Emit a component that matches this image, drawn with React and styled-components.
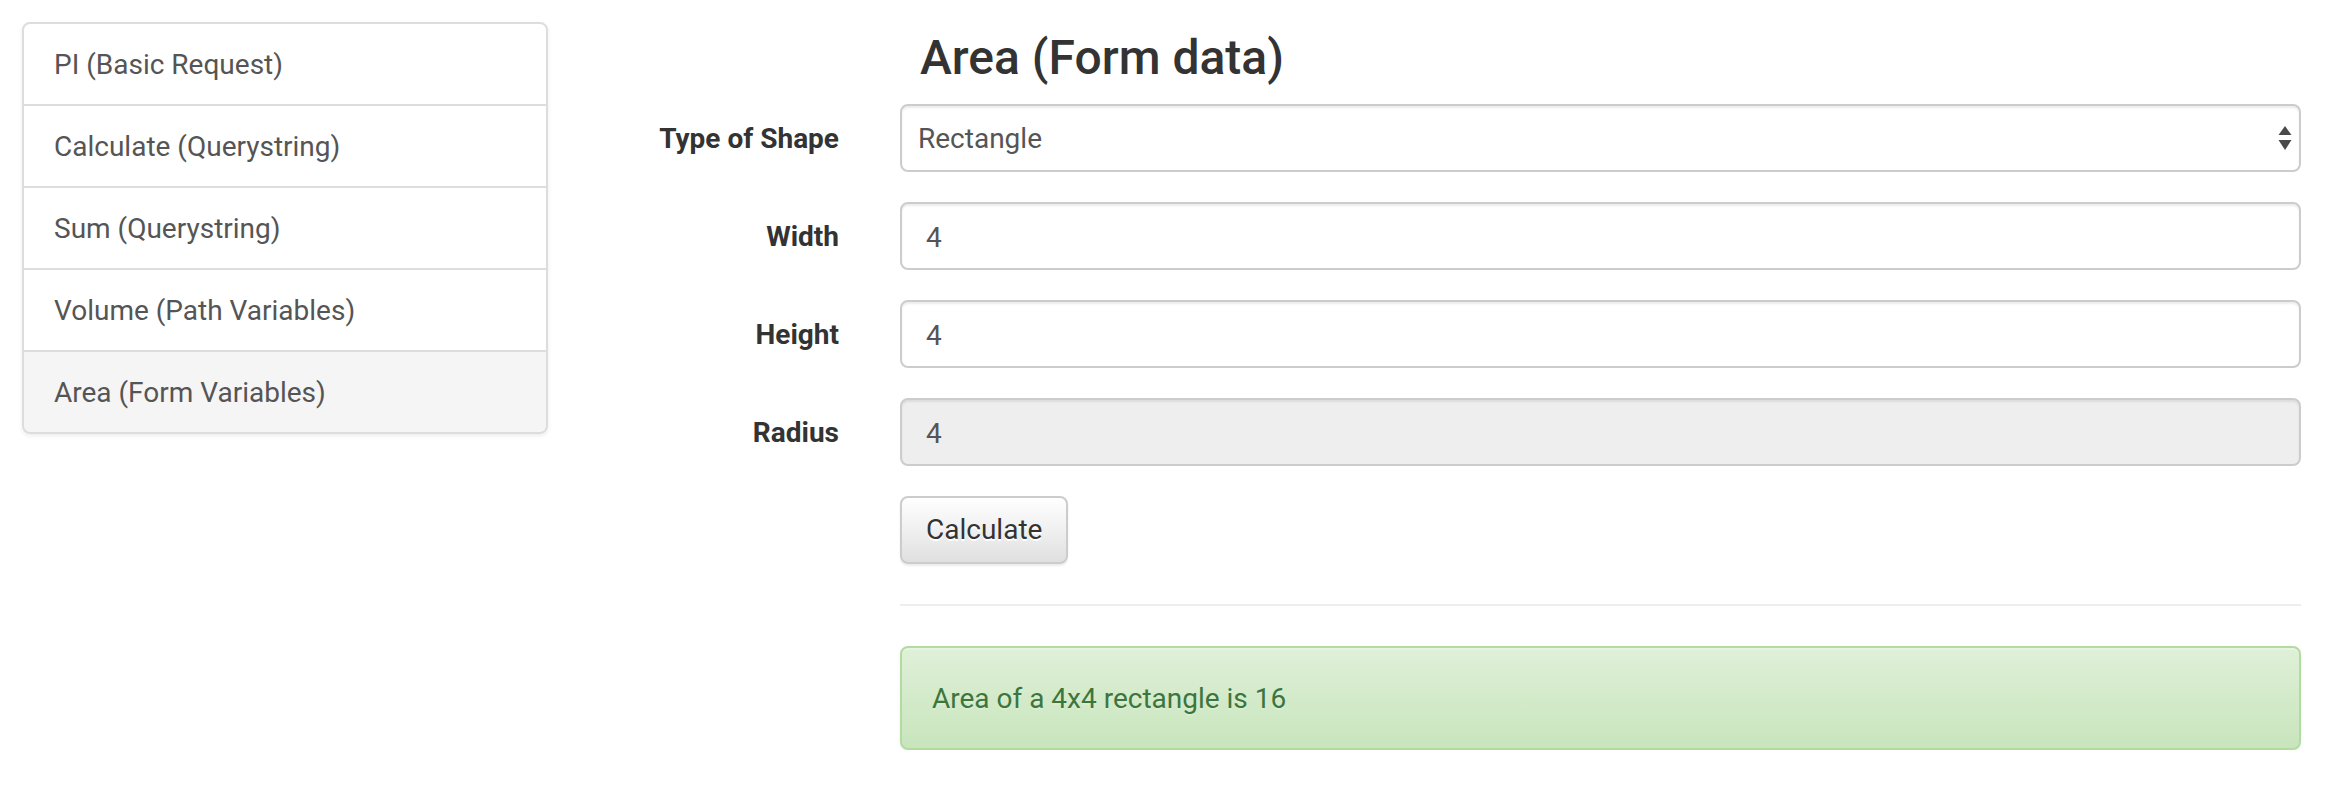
import styled, { createGlobalStyle } from "styled-components";

const GlobalStyle = createGlobalStyle`
  html, body {
    margin: 0;
    padding: 0;
    background: #fff;
  }
  body {
    font-family: Roboto, "Liberation Sans", Arial, sans-serif;
    font-size: 28px;
    line-height: 40px;
    color: #333;
  }
  * {
    box-sizing: border-box;
  }
`;

const Page = styled.div`
  display: flex;
  align-items: flex-start;
  padding: 22px 0 0 22px;
`;

const ListGroup = styled.div`
  width: 526px;
  flex: none;
  border-radius: 8px;
  box-shadow: 0 2px 4px rgba(0, 0, 0, 0.075);
`;

const ListItem = styled.a`
  display: block;
  padding: 21px 30px 19px;
  margin-bottom: -2px;
  border: 2px solid #ddd;
  color: #555;
  text-decoration: none;
  line-height: 40px;
  background: ${(props) => (props.active ? "#f5f5f5" : "#fff")};
  cursor: pointer;

  &:first-child {
    border-top-left-radius: 8px;
    border-top-right-radius: 8px;
  }
  &:last-child {
    margin-bottom: 0;
    border-bottom-left-radius: 8px;
    border-bottom-right-radius: 8px;
  }
`;

const Main = styled.div`
  width: 1753px;
  flex: none;
`;

const Offset = styled.div`
  margin-left: 352px;
`;

const Title = styled.h3`
  margin: 9px 0 20px;
  padding-left: 20px;
  font-size: 48px;
  font-weight: 500;
  line-height: 53px;
  color: #333;
`;

const FormGroup = styled.div`
  display: grid;
  grid-template-columns: 291px 1fr;
  column-gap: 61px;
  align-items: center;
  margin-bottom: 30px;
`;

const Label = styled.label`
  padding-top: 2px;
  text-align: right;
  font-weight: 700;
  color: #333;
  line-height: 40px;
`;

const SelectWrap = styled.div`
  position: relative;
`;

const Select = styled.select`
  display: block;
  width: 100%;
  height: 68px;
  padding: 2px 40px 0 16px;
  font: inherit;
  color: #555;
  background: #fff;
  border: 2px solid #ccc;
  border-radius: 8px;
  box-shadow: inset 0 2px 2px rgba(0, 0, 0, 0.075);
  appearance: none;
  -webkit-appearance: none;
  outline: none;
`;

const Arrows = styled.svg`
  position: absolute;
  right: 9px;
  top: 22px;
  pointer-events: none;
`;

const Input = styled.input`
  display: block;
  width: 100%;
  height: 68px;
  padding: 13px 24px 11px;
  font: inherit;
  color: #555;
  background: ${(props) => (props.readOnly ? "#eee" : "#fff")};
  border: 2px solid #ccc;
  border-radius: 8px;
  box-shadow: inset 0 2px 2px rgba(0, 0, 0, 0.075);
  outline: none;
`;

const Button = styled.button`
  display: block;
  height: 68px;
  padding: 12px 24px;
  font: inherit;
  line-height: 40px;
  color: #333;
  background: linear-gradient(to bottom, #fff 0, #e0e0e0 100%);
  border: 2px solid #ccc;
  border-radius: 8px;
  text-shadow: 0 2px 0 #fff;
  box-shadow: inset 0 2px 0 rgba(255, 255, 255, 0.15),
    0 2px 2px rgba(0, 0, 0, 0.075);
  cursor: pointer;
`;

const Rule = styled.hr`
  margin: 40px 0;
  border: 0;
  border-top: 2px solid #eee;
`;

const Alert = styled.div`
  padding: 31px 30px 29px;
  border: 2px solid #b2dba1;
  border-radius: 8px;
  color: #3c763d;
  line-height: 40px;
  background: linear-gradient(to bottom, #dff0d8 0, #c8e5bc 100%);
  text-shadow: 0 2px 0 rgba(255, 255, 255, 0.2);
  box-shadow: inset 0 2px 0 rgba(255, 255, 255, 0.25),
    0 2px 4px rgba(0, 0, 0, 0.05);
`;

const links = [
  "PI (Basic Request)",
  "Calculate (Querystring)",
  "Sum (Querystring)",
  "Volume (Path Variables)",
  "Area (Form Variables)",
];

export default function App() {
  return (
    <>
      <GlobalStyle />
      <Page>
        <ListGroup>
          {links.map((l, i) => (
            <ListItem key={l} active={i === links.length - 1 ? 1 : 0}>
              {l}
            </ListItem>
          ))}
        </ListGroup>
        <Main>
          <Offset>
            <Title>Area (Form data)</Title>
          </Offset>
          <FormGroup>
            <Label>Type of Shape</Label>
            <SelectWrap>
              <Select defaultValue="rectangle">
                <option value="rectangle">Rectangle</option>
                <option value="circle">Circle</option>
              </Select>
              <Arrows width="14" height="26" viewBox="0 0 14 26">
                <path d="M7 0 L13.5 9 L0.5 9 Z" fill="#4a4a4a" />
                <path d="M0.5 14 L13.5 14 L7 24 Z" fill="#4a4a4a" />
              </Arrows>
            </SelectWrap>
          </FormGroup>
          <FormGroup>
            <Label>Width</Label>
            <Input defaultValue="4" />
          </FormGroup>
          <FormGroup>
            <Label>Height</Label>
            <Input defaultValue="4" />
          </FormGroup>
          <FormGroup>
            <Label>Radius</Label>
            <Input defaultValue="4" readOnly />
          </FormGroup>
          <Offset>
            <Button>Calculate</Button>
            <Rule />
            <Alert>Area of a 4x4 rectangle is 16</Alert>
          </Offset>
        </Main>
      </Page>
    </>
  );
}
